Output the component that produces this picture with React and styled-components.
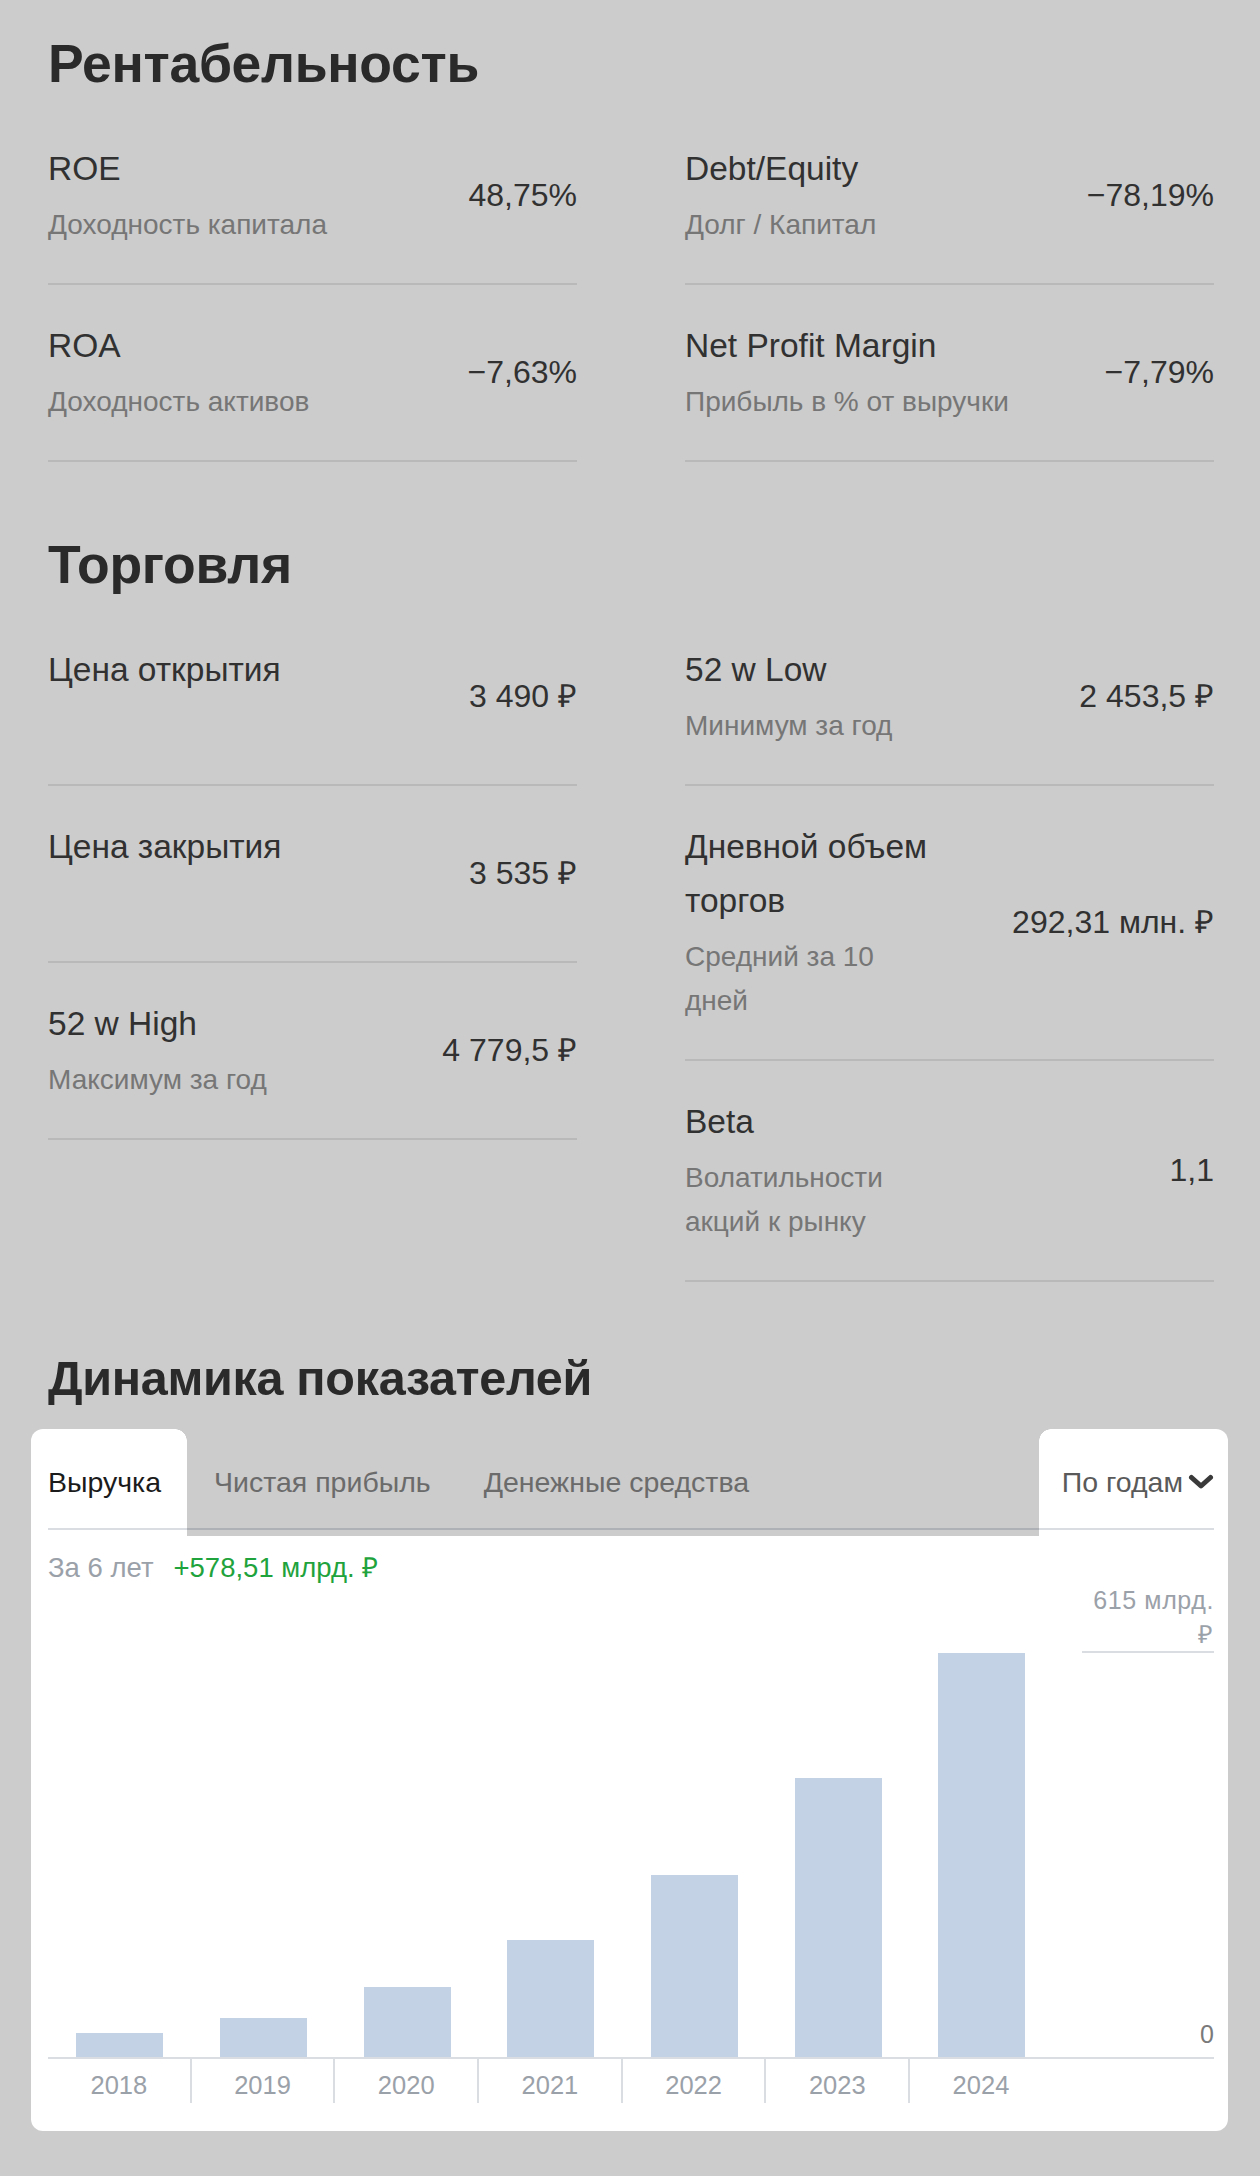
import React from 'react'
import styled, { createGlobalStyle } from 'styled-components'

// constants
const FONT = '"Liberation Sans", Arial, sans-serif'
const TEXT = '#313131'
const TEXT_SOFT = '#767676'
const LINE = '#b9b9b9'
const CHART_LINE = '#dadee3'
const AXIS_TEXT = '#9ba1a9'
const PLOT_HEIGHT = 406
const PLOT_MAX = 615
const SLOT_WIDTH = 143.7

const GlobalStyle = createGlobalStyle`
  html, body {
    margin: 0;
    padding: 0;
    background: #cccccc;
  }
  body {
    font-family: ${FONT};
    -webkit-font-smoothing: antialiased;
  }
`

const Page = styled.main`
  width: 1260px;
  box-sizing: border-box;
  padding: 32px 46px 45px 48px;
`
const Section = styled.section`
  margin-top: ${({ gap }) => gap || 0}px;
`
const Title = styled.h2`
  margin: 0 0 ${({ small }) => (small ? 19 : 12)}px;
  font-size: ${({ small }) => (small ? 48.5 : 53.5)}px;
  line-height: 64px;
  font-weight: 700;
  color: #2a2a2a;
  letter-spacing: -0.3px;
`
const Columns = styled.div`
  display: grid;
  grid-template-columns: 1fr 1fr;
  column-gap: 108px;
  align-items: start;
`
const Column = styled.div`
  display: flex;
  flex-direction: column;
`
const Row = styled.div`
  display: flex;
  align-items: center;
  justify-content: space-between;
  gap: 24px;
  min-height: 177px;
  box-sizing: border-box;
  padding: 34px 0 36px;
  border-bottom: 2px solid ${LINE};
`
const LabelBlock = styled.div`
  align-self: flex-start;
  max-width: ${({ narrow }) => (narrow ? '250px' : 'none')};
`
const Label = styled.div`
  font-size: 33.5px;
  line-height: 54px;
  color: ${TEXT};
`
const Sub = styled.div`
  margin-top: 7px;
  font-size: 28px;
  line-height: 44px;
  color: ${TEXT_SOFT};
`
const Value = styled.div`
  flex: none;
  font-size: 32px;
  line-height: 44px;
  color: ${TEXT};
  text-align: right;
  white-space: nowrap;
`

// chart card
const Card = styled.div`
  position: relative;
  margin: 0 -14px 0 -17px;
  padding: 0 14px 28px 17px;
  background: #ffffff;
  border-radius: 12px;
`
const TabBar = styled.div`
  display: flex;
  align-items: center;
  gap: 53px;
  height: 101px;
  box-sizing: border-box;
  padding-top: 7px;
  border-bottom: 2px solid ${CHART_LINE};
`
const Tab = styled.div`
  font-size: 28.5px;
  line-height: 40px;
  color: ${({ active }) => (active ? '#1b1b1b' : '#868686')};
  white-space: nowrap;
`
const PeriodSelect = styled.div`
  margin-left: auto;
  display: flex;
  align-items: center;
  gap: 5px;
  font-size: 28.5px;
  line-height: 40px;
  color: #5a5a5a;
  & svg {
    display: block;
  }
`
// dim layer of the onboarding spotlight over the inactive tabs
const Dim = styled.div`
  position: absolute;
  top: 0;
  left: 156px;
  width: 852px;
  height: 107px;
  background: rgba(0, 0, 0, 0.2);
  pointer-events: none;
  &::before,
  &::after {
    content: '';
    position: absolute;
    top: 0;
    width: 12px;
    height: 12px;
  }
  &::before {
    left: -12px;
    background: radial-gradient(circle at 0 100%, transparent 11.5px, rgba(0, 0, 0, 0.2) 12px);
  }
  &::after {
    right: -12px;
    background: radial-gradient(circle at 100% 100%, transparent 11.5px, rgba(0, 0, 0, 0.2) 12px);
  }
`
const Summary = styled.div`
  display: flex;
  gap: 20px;
  margin-top: 23px;
  font-size: 27.5px;
  line-height: 30px;
`
const Period = styled.span`
  color: ${AXIS_TEXT};
`
const Delta = styled.span`
  color: #1fa33c;
`
const Chart = styled.div`
  display: flex;
  height: 474px;
  border-bottom: 2px solid ${CHART_LINE};
`
const Slot = styled.div`
  flex: 0 0 ${SLOT_WIDTH}px;
  display: flex;
  align-items: flex-end;
  justify-content: center;
`
const Bar = styled.div`
  width: 87px;
  background: #c3d3e5;
`
const Axis = styled.div`
  flex: 1;
  display: flex;
  flex-direction: column;
  align-items: flex-end;
  justify-content: space-between;
  padding-bottom: 8px;
  font-size: 25px;
  color: ${AXIS_TEXT};
`
const AxisMax = styled.div`
  width: 132px;
  line-height: 34px;
  text-align: right;
  letter-spacing: 0.6px;
  border-bottom: 2px solid ${CHART_LINE};
`
const AxisZero = styled.div`
  line-height: 30px;
  color: #7a7a7a;
`
const Years = styled.div`
  display: flex;
`
const Year = styled.div`
  flex: 0 0 ${SLOT_WIDTH}px;
  box-sizing: border-box;
  height: 44px;
  padding-top: 12px;
  line-height: 28px;
  text-align: center;
  font-size: 25.5px;
  color: ${AXIS_TEXT};
  border-right: 2px solid ${({ last }) => (last ? 'transparent' : CHART_LINE)};
`

const Chevron = () => (
  <svg width="26" height="16" viewBox="0 0 26 16" fill="none">
    <path d="M3.5 3.5 L13 12 L22.5 3.5" stroke="#3a3a3a" strokeWidth="5" strokeLinecap="round" strokeLinejoin="round" />
  </svg>
)

const profitability = [
  [
    { label: 'ROE', sub: 'Доходность капитала', value: '48,75%' },
    { label: 'ROA', sub: 'Доходность активов', value: '−7,63%' },
  ],
  [
    { label: 'Debt/Equity', sub: 'Долг / Капитал', value: '−78,19%' },
    { label: 'Net Profit Margin', sub: 'Прибыль в % от выручки', value: '−7,79%' },
  ],
]

const trading = [
  [
    { label: 'Цена открытия', value: '3 490 ₽' },
    { label: 'Цена закрытия', value: '3 535 ₽' },
    { label: '52 w High', sub: 'Максимум за год', value: '4 779,5 ₽' },
  ],
  [
    { label: '52 w Low', sub: 'Минимум за год', value: '2 453,5 ₽' },
    { label: 'Дневной объем торгов', sub: 'Средний за 10 дней', value: '292,31 млн. ₽' },
    { label: 'Beta', sub: 'Волатильности акций к рынку', value: '1,1' },
  ],
]

const revenue = [
  { year: 2018, value: 36.4 },
  { year: 2019, value: 59.1 },
  { year: 2020, value: 106 },
  { year: 2021, value: 177.2 },
  { year: 2022, value: 275.7 },
  { year: 2023, value: 422.6 },
  { year: 2024, value: 612 },
]

const MetricGrid = ({ columns, narrow }) => (
  <Columns>
    {columns.map((col, i) => (
      <Column key={i}>
        {col.map(m => (
          <Row key={m.label}>
            <LabelBlock narrow={narrow}>
              <Label>{m.label}</Label>
              {m.sub && <Sub>{m.sub}</Sub>}
            </LabelBlock>
            <Value>{m.value}</Value>
          </Row>
        ))}
      </Column>
    ))}
  </Columns>
)

const App = () => (
  <Page>
    <GlobalStyle />
    <Section>
      <Title>Рентабельность</Title>
      <MetricGrid columns={profitability} />
    </Section>
    <Section gap={71}>
      <Title>Торговля</Title>
      <MetricGrid columns={trading} narrow />
    </Section>
    <Section gap={64}>
      <Title small>Динамика показателей</Title>
      <Card>
        <TabBar>
          <Tab active>Выручка</Tab>
          <Tab>Чистая прибыль</Tab>
          <Tab>Денежные средства</Tab>
          <PeriodSelect>
            По годам
            <Chevron />
          </PeriodSelect>
        </TabBar>
        <Dim />
        <Summary>
          <Period>За 6 лет</Period>
          <Delta>+578,51 млрд. ₽</Delta>
        </Summary>
        <Chart>
          {revenue.map(r => (
            <Slot key={r.year}>
              <Bar style={{ height: `${(r.value / PLOT_MAX) * PLOT_HEIGHT}px` }} />
            </Slot>
          ))}
          <Axis>
            <AxisMax>615 млрд. ₽</AxisMax>
            <AxisZero>0</AxisZero>
          </Axis>
        </Chart>
        <Years>
          {revenue.map((r, i) => (
            <Year key={r.year} last={i === revenue.length - 1}>{r.year}</Year>
          ))}
        </Years>
      </Card>
    </Section>
  </Page>
)

export default App
